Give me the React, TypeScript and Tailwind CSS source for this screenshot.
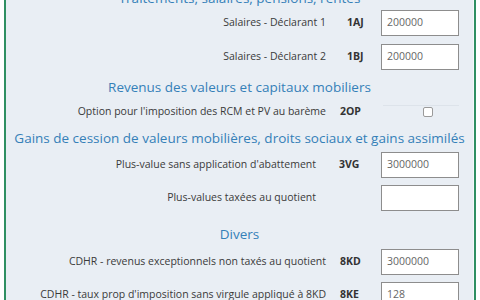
import React from "react";

const font = { fontFamily: '"Open Sans", "DejaVu Sans", sans-serif' };

function Input({ value }: { value: string }) {
  return (
    <div className="w-[78px] h-[26px] border border-[#8d8d8d] bg-white flex items-center pl-[5px] text-[10.5px] text-[#666] shrink-0">
      {value}
    </div>
  );
}

export default function App() {
  return (
    <div className="w-[480px] h-[300px] overflow-hidden bg-white px-[4px]" style={font}>
      <div className="w-[472px] h-[300px] overflow-hidden border-l-2 border-r-2 border-[#2f8f62] bg-[#e9eef4]">
        <div className="border-r border-[#f5f7fa] h-[320px] -mt-[12px] flex flex-col text-[#3a3a3a]">
          {/* Section 1 */}
          <div className="shrink-0 h-[18px] leading-[20px] text-[13.5px] text-[#3580b8] text-center whitespace-nowrap">
            Traitements, salaires, pensions, rentes
          </div>
          <div className="shrink-0 flex items-center h-[34px] text-[10.5px]">
            <div className="w-[320px] text-right whitespace-nowrap">Salaires - Déclarant 1</div>
            <div className="w-[55px] pl-[21px] font-bold text-[#333]">1AJ</div>
            <Input value="200000" />
          </div>
          <div className="shrink-0 flex items-center h-[34px] text-[10.5px]">
            <div className="w-[320px] text-right whitespace-nowrap">Salaires - Déclarant 2</div>
            <div className="w-[55px] pl-[21px] font-bold text-[#333]">1BJ</div>
            <Input value="200000" />
          </div>

          {/* Section 2 */}
          <div className="shrink-0 h-[26px] pt-[3px] leading-[20px] text-[13.5px] text-[#3580b8] text-center whitespace-nowrap">
            Revenus des valeurs et capitaux mobiliers
          </div>
          <div className="shrink-0 flex items-center h-[23px] text-[10.5px]">
            <div className="w-[320px] text-right whitespace-nowrap">
              Option pour l'imposition des RCM et PV au barème
            </div>
            <div className="w-[55px] pl-[14px] font-bold text-[#333]">2OP</div>
            <div className="w-[78px] self-stretch flex flex-col">
              <div className="h-px bg-[#dde3ea] mt-[5px] ml-[2px]"></div>
              <div className="ml-[42px] mt-[1px] w-[10px] h-[10px] border border-[#9a9a9a] rounded-[2px] bg-white"></div>
            </div>
          </div>

          {/* Section 3 */}
          <div className="shrink-0 h-[25px] pt-[5px] leading-[20px] text-[13.5px] text-[#3580b8] text-center whitespace-nowrap">
            Gains de cession de valeurs mobilières, droits sociaux et gains assimilés
          </div>
          <div className="shrink-0 flex items-center h-[33px] text-[10.5px]">
            <div className="w-[310px] text-right whitespace-nowrap">Plus-value sans application d'abattement</div>
            <div className="w-[65px] pl-[23px] font-bold text-[#333]">3VG</div>
            <Input value="3000000" />
          </div>
          <div className="shrink-0 flex items-center h-[33px] text-[10.5px]">
            <div className="w-[310px] text-right whitespace-nowrap">Plus-values taxées au quotient</div>
            <div className="w-[65px] pl-[23px] font-bold text-[#333]"></div>
            <Input value="" />
          </div>

          {/* Section 4 */}
          <div className="shrink-0 h-[31px] pt-[10px] leading-[20px] text-[13.5px] text-[#3580b8] text-center whitespace-nowrap">
            Divers
          </div>
          <div className="shrink-0 flex items-center h-[33px] text-[10.5px]">
            <div className="w-[320px] text-right whitespace-nowrap">
              CDHR - revenus exceptionnels non taxés au quotient
            </div>
            <div className="w-[55px] pl-[14px] font-bold text-[#333]">8KD</div>
            <Input value="3000000" />
          </div>
          <div className="shrink-0 flex items-center h-[33px] text-[10.5px]">
            <div className="w-[320px] text-right whitespace-nowrap">
              CDHR - taux prop d'imposition sans virgule appliqué à 8KD
            </div>
            <div className="w-[55px] pl-[14px] font-bold text-[#333]">8KE</div>
            <Input value="128" />
          </div>
        </div>
      </div>
    </div>
  );
}
